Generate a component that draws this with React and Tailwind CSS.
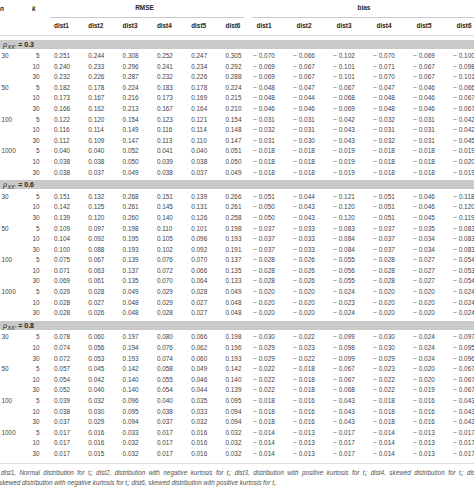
import React from 'react';

// RMSE / bias table, three reliability blocks
const GROUPS = [
  {
    rho: '0.3',
    rows: [
      ['30', '5', '0.251 0.244 0.308 0.252 0.247 0.305', '0.070 0.066 0.102 0.070 0.069 0.100'],
      ['', '10', '0.240 0.233 0.296 0.241 0.234 0.292', '0.069 0.067 0.101 0.071 0.067 0.098'],
      ['', '30', '0.232 0.226 0.287 0.232 0.226 0.288', '0.069 0.067 0.101 0.070 0.067 0.101'],
      ['50', '5', '0.182 0.178 0.224 0.183 0.178 0.224', '0.048 0.047 0.067 0.047 0.046 0.066'],
      ['', '10', '0.173 0.167 0.216 0.173 0.169 0.215', '0.048 0.044 0.068 0.048 0.046 0.067'],
      ['', '30', '0.166 0.162 0.213 0.167 0.164 0.210', '0.046 0.046 0.069 0.048 0.046 0.067'],
      ['100', '5', '0.122 0.120 0.154 0.123 0.121 0.154', '0.031 0.031 0.042 0.032 0.031 0.042'],
      ['', '10', '0.116 0.114 0.149 0.116 0.114 0.148', '0.032 0.031 0.043 0.031 0.031 0.042'],
      ['', '30', '0.112 0.109 0.147 0.113 0.110 0.147', '0.031 0.030 0.043 0.032 0.031 0.045'],
      ['1000', '5', '0.040 0.040 0.052 0.041 0.040 0.051', '0.018 0.018 0.019 0.018 0.018 0.019'],
      ['', '10', '0.038 0.038 0.050 0.039 0.038 0.050', '0.018 0.018 0.019 0.018 0.018 0.020'],
      ['', '30', '0.038 0.037 0.049 0.038 0.037 0.049', '0.018 0.018 0.019 0.018 0.018 0.019'],
    ],
  },
  {
    rho: '0.6',
    rows: [
      ['30', '5', '0.151 0.132 0.268 0.151 0.139 0.266', '0.051 0.044 0.121 0.051 0.046 0.118'],
      ['', '10', '0.142 0.125 0.261 0.145 0.131 0.261', '0.050 0.043 0.120 0.051 0.046 0.120'],
      ['', '30', '0.139 0.120 0.260 0.140 0.126 0.258', '0.050 0.043 0.120 0.051 0.045 0.119'],
      ['50', '5', '0.109 0.097 0.198 0.110 0.101 0.198', '0.037 0.033 0.083 0.037 0.035 0.083'],
      ['', '10', '0.104 0.092 0.195 0.105 0.096 0.193', '0.037 0.033 0.084 0.037 0.034 0.083'],
      ['', '30', '0.100 0.088 0.193 0.102 0.092 0.191', '0.037 0.033 0.084 0.037 0.034 0.083'],
      ['100', '5', '0.075 0.067 0.139 0.076 0.070 0.137', '0.028 0.026 0.055 0.028 0.027 0.054'],
      ['', '10', '0.071 0.063 0.137 0.072 0.066 0.135', '0.028 0.026 0.056 0.028 0.027 0.053'],
      ['', '30', '0.069 0.061 0.135 0.070 0.064 0.133', '0.028 0.026 0.055 0.028 0.027 0.054'],
      ['1000', '5', '0.029 0.028 0.049 0.029 0.028 0.049', '0.020 0.020 0.024 0.020 0.020 0.024'],
      ['', '10', '0.028 0.027 0.048 0.029 0.027 0.048', '0.020 0.020 0.023 0.020 0.020 0.024'],
      ['', '30', '0.028 0.026 0.048 0.028 0.027 0.048', '0.020 0.020 0.024 0.020 0.020 0.024'],
    ],
  },
  {
    rho: '0.8',
    rows: [
      ['30', '5', '0.078 0.060 0.197 0.080 0.066 0.198', '0.030 0.022 0.099 0.030 0.024 0.097'],
      ['', '10', '0.074 0.056 0.194 0.076 0.062 0.196', '0.029 0.023 0.098 0.030 0.024 0.095'],
      ['', '30', '0.072 0.053 0.193 0.074 0.060 0.193', '0.029 0.022 0.099 0.029 0.024 0.096'],
      ['50', '5', '0.057 0.045 0.142 0.058 0.049 0.142', '0.022 0.018 0.067 0.023 0.020 0.067'],
      ['', '10', '0.054 0.042 0.140 0.055 0.046 0.140', '0.022 0.018 0.067 0.022 0.020 0.067'],
      ['', '30', '0.052 0.040 0.140 0.054 0.044 0.139', '0.022 0.018 0.068 0.022 0.019 0.067'],
      ['100', '5', '0.039 0.032 0.096 0.040 0.035 0.095', '0.018 0.016 0.043 0.018 0.016 0.043'],
      ['', '10', '0.038 0.030 0.095 0.038 0.033 0.094', '0.018 0.016 0.043 0.018 0.016 0.043'],
      ['', '30', '0.037 0.029 0.094 0.037 0.032 0.094', '0.018 0.016 0.043 0.018 0.016 0.043'],
      ['1000', '5', '0.017 0.016 0.033 0.017 0.016 0.032', '0.014 0.013 0.017 0.014 0.013 0.017'],
      ['', '10', '0.017 0.016 0.032 0.017 0.016 0.032', '0.014 0.013 0.017 0.014 0.013 0.017'],
      ['', '30', '0.017 0.015 0.032 0.017 0.016 0.032', '0.014 0.013 0.017 0.014 0.013 0.017'],
    ],
  },
];

const DISTS = ['dist1', 'dist2', 'dist3', 'dist4', 'dist5', 'dist6'];

// n | k | 6 x RMSE | 6 x bias
const COLS = 'grid grid-cols-[24px_21px_repeat(5,34.3px)_27.5px_repeat(6,40px)]';

function DataRow({ row }) {
  const [n, k, rmse, bias] = row;
  return (
    <div className={`${COLS} h-[10.6px] items-center text-[#3f3f3f]`}>
      <div className="pl-[1.5px] whitespace-nowrap">{n}</div>
      <div className="text-right pr-[5.5px]">{k}</div>
      {rmse.split(' ').map((v, i) => (
        <div key={i} className="pl-[9px] whitespace-nowrap">{v}</div>
      ))}
      {bias.split(' ').map((v, i) => (
        <div key={i} className="flex justify-center whitespace-nowrap">
          <span>−</span>
          <span className="ml-[1.8px]">{v}</span>
        </div>
      ))}
    </div>
  );
}

function Band({ rho }) {
  return (
    <div className="h-[9px] leading-[9px] bg-[#c9c9c9] pl-[3px] text-[7px] text-[#1f1f1f] whitespace-nowrap">
      <span className="italic">ρ</span>
      <sub className="italic text-[5.4px] ml-[0.5px] align-[-1px]">XX′</sub>
      <span className="font-bold ml-[2.5px]">= {rho}</span>
    </div>
  );
}

export default function App() {
  return (
    <div className="w-[474px] h-[487px] overflow-hidden bg-white font-['Liberation_Sans',Arial,sans-serif] text-[6.4px] leading-none">
      {/* header */}
      <div className={`${COLS} h-[18px] text-[#222] font-bold`}>
        <div className="italic flex items-center">n</div>
        <div className="italic flex items-center pl-[8px]">k</div>
        <div className="col-span-6 flex flex-col">
          <div className="flex-1 flex items-center justify-center">RMSE</div>
          <div className="ml-[5px] border-b border-[#cacaca]" />
        </div>
        <div className="col-span-6 flex flex-col">
          <div className="flex-1 flex items-center justify-center">bias</div>
          <div className="ml-[8px] border-b border-[#cacaca]" />
        </div>
      </div>
      <div className={`${COLS} h-[18px] items-center text-[#222] font-bold border-b-[1.5px] border-[#dcdcdc]`}>
        <div />
        <div />
        {DISTS.map((d) => (
          <div key={d} className="pl-[9px]">{d}</div>
        ))}
        {DISTS.map((d) => (
          <div key={'b' + d} className="flex justify-center">{d}</div>
        ))}
      </div>

      <div className="pt-[3.5px]">
        {GROUPS.map((g) => (
          <div key={g.rho}>
            <Band rho={g.rho} />
            <div className="pt-[2.5px] pb-[2px]">
              {g.rows.map((r, i) => (
                <DataRow key={i} row={r} />
              ))}
            </div>
          </div>
        ))}
      </div>

      {/* footnote */}
      <div className="mt-[1.5px] border-t-[1.5px] border-[#dcdcdc] pt-[3.8px] italic text-[#4f4f4f] text-[6.3px] leading-[10px] whitespace-nowrap">
        <div className="pl-[1px] w-[482px] text-justify [text-align-last:justify] whitespace-normal">
          dist1, Normal distribution for t<sub className="text-[4px]">i</sub>; dist2, distribution with negative kurtosis for t<sub className="text-[4px]">i</sub>; dist3, distribution with positive kurtosis for t<sub className="text-[4px]">i</sub>; dist4, skewed distribution for t<sub className="text-[4px]">i</sub>; dist5,
        </div>
        <div className="-ml-[1px]">
          skewed distribution with negative kurtosis for t<sub className="text-[4px]">i</sub>; dist6, skewed distribution with positive kurtosis for t<sub className="text-[4px]">i</sub>.
        </div>
      </div>
    </div>
  );
}
